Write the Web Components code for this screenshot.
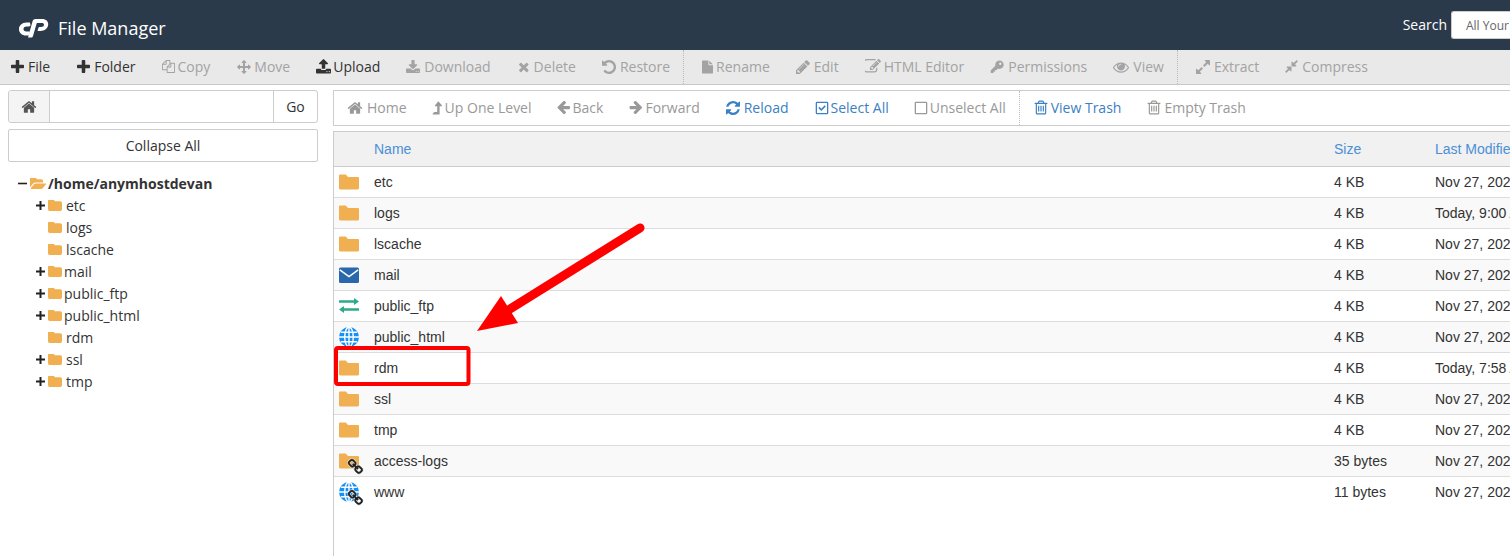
<!DOCTYPE html>
<html lang="en"><head><meta charset="utf-8"><title>File Manager</title>
<style>
html,body{margin:0;padding:0;height:556px;overflow:hidden;background:#fff}
body{font-family:"Open Sans","Liberation Sans",sans-serif;font-size:14px;color:#333}
</style></head><body>
<fm-app></fm-app>
<script>
const P={
home:[1792,"M1472 992v480q0 26-19 45t-45 19h-384v-384h-256v384h-384q-26 0-45-19t-19-45v-480q0-1 .5-3t.5-3l575-474 575 474q1 2 1 6zm223-69l-62 74q-8 9-21 11h-3q-13 0-21-7l-692-577-692 577q-12 8-24 7-13-2-21-11l-62-74q-8-10-7-23.500t11-21.500l719-599q32-26 76-26t76 26l244 204v-195q0-14 9-23t23-9h192q14 0 23 9t9 23v408l219 182q10 8 11 21.500t-7 23.500z"],
folder:[1792,"M1728 608v704q0 92-66 158t-158 66h-1216q-92 0-158-66t-66-158v-960q0-92 66-158t158-66h320q92 0 158 66t66 158v32h672q92 0 158 66t66 158z","64 240 1664 1300"],
open:[1920,"M1879 952q0 31-31 66l-336 396q-43 51-120.500 86.500t-143.500 35.500h-1088q-34 0-60.500-13t-26.500-43q0-31 31-66l336-396q43-51 120.500-86.500t143.500-35.500h1088q34 0 60.500 13t26.500 43zm-343-344v160h-832q-94 0-197 47.500t-164 119.500l-337 396-5 6q0-4-.5-12.500t-.5-12.500v-960q0-92 66-158t158-66h320q92 0 158 66t66 158v32h544q92 0 158 66t66 158z","0 256 1879 1280"],
plus:[1792,"M1600 736v192q0 40-28 68t-68 28h-416v416q0 40-28 68t-68 28h-192q-40 0-68-28t-28-68v-416h-416q-40 0-68-28t-28-68v-192q0-40 28-68t68-28h416v-416q0-40 28-68t68-28h192q40 0 68 28t28 68v416h416q40 0 68 28t28 68z","192 128 1408 1408"],
tplus:[9,"M3.500 0h2v3.500H9v2H5.500V9h-2V5.500H0v-2h3.500z","0 0 9 9"],
tminus:[9,"M0 3.700h9v1.600H0z","0 0 9 9"],
close:[1792,"M1490 1322q0 40-28 68l-136 136q-28 28-68 28t-68-28l-294-294-294 294q-28 28-68 28t-68-28l-136-136q-28-28-28-68t28-68l294-294-294-294q-28-28-28-68t28-68l136-136q28-28 68-28t68 28l294 294 294-294q28-28 68-28t68 28l136 136q28 28 28 68t-28 68l-294 294 294 294q28 28 28 68z","46 155 1500 1500"],
undo:[1792,"M1664 896q0 156-61 298t-164 245-245 164-298 61q-172 0-327-72.500t-264-204.500q-7-10-6.500-22.500t8.500-20.500l137-138q10-9 25-9 16 2 23 12 73 95 179 147t225 52q104 0 198.500-40.500t163.500-109.500 109.500-163.500 40.500-198.500-40.500-198.500-109.500-163.500-163.500-109.500-198.500-40.500q-98 0-188 35.500t-160 101.500l137 138q31 30 14 69-17 40-59 40h-448q-26 0-45-19t-19-45v-448q0-42 40-59 39-17 69 14l130 129q107-101 244.500-156.500t284.500-55.500q156 0 298 61t245 164 164 245 61 298z","128 128 1536 1536"],
refresh:[1792,"M1639 1056q0 5-1 7-64 268-268 434.500t-478 166.500q-146 0-282.500-55t-243.500-157l-129 129q-19 19-45 19t-45-19-19-45v-448q0-26 19-45t45-19h448q26 0 45 19t19 45-19 45l-137 137q71 66 161 102t187 36q134 0 250-65t186-179q11-17 53-117 8-23 30-23h192q13 0 22.500 9.500t9.500 22.500zm25-800v448q0 26-19 45t-45 19h-448q-26 0-45-19t-19-45 19-45l138-138q-148-137-349-137-134 0-250 65t-186 179q-11 17-53 117-8 23-30 23h-199q-13 0-22.500-9.500t-9.500-22.500v-7q65-268 270-434.500t480-166.500q146 0 284 55.500t245 156.500l130-129q19-19 45-19t45 19 19 45z","128 128 1536 1536"],
left:[1792,"M1664 896v128q0 53-32.500 90.500t-84.500 37.500h-704l293 294q38 36 38 90t-38 90l-75 76q-37 37-90 37-52 0-91-37l-651-652q-37-37-37-90 0-52 37-91l651-650q38-38 91-38 52 0 90 38l75 74q38 38 38 91t-38 91l-293 293h704q52 0 84.500 37.500t32.500 90.500z","128 192 1536 1536"],
right:[1792,"M1600 960q0 54-37 91l-651 651q-39 37-91 37-51 0-90-37l-75-75q-38-38-38-91t38-91l293-293h-704q-52 0-84.500-37.500t-32.500-90.500v-128q0-53 32.500-90.500t84.500-37.500h704l-293-294q-38-36-38-90t38-90l75-75q38-38 90-38 53 0 91 38l651 651q37 35 37 90z","64 192 1536 1536"],
pencil:[1792,"M491 1536l91-91-235-235-91 91v107h128v128h107zm523-928q0-22-22-22-10 0-17 7l-542 542q-7 7-7 17 0 22 22 22 10 0 17-7l542-542q7-7 7-17zm-54-192l416 416-832 832h-416v-416zm683 96q0 53-37 90l-166 166-416-416 166-165q36-38 90-38 53 0 91 38l235 234q37 39 37 91z","128 128 1536 1536"],
file:[1536,"M1024 512v-472q22 14 36 28l408 408q14 14 28 36h-472zm-128 32q0 40 28 68t68 28h544v1056q0 40-28 68t-68 28h-1344q-40 0-68-28t-28-68v-1600q0-40 28-68t68-28h800v544z"],
eye:[1792,"M1664 960q-152-236-381-353 61 104 61 225 0 185-131.500 316.500t-316.500 131.500-316.500-131.500-131.500-316.500q0-121 61-225-229 117-381 353 133 205 333.500 326.500t434.500 121.500 434.500-121.500 333.500-326.500zm-720-384q0-20-14-34t-34-14q-125 0-214.500 89.500t-89.500 214.500q0 20 14 34t34 14 34-14 14-34q0-86 61-147t147-61q20 0 34-14t14-34zm848 384q0 34-20 69-140 230-376.500 368.500t-499.500 138.500-499.500-139-376.500-368q-20-35-20-69t20-69q140-229 376.500-368t499.500-139 499.500 139 376.500 368q20 35 20 69z"],
key:[15,"M10 .5a4.500 4.500 0 1 1-1.500 8.700L6.700 11H5.200v1.500H3.700V14H.8L.7 11.200 5.800 6.200A4.500 4.500 0 0 1 10 .5zM11 2.700a1.300 1.300 0 1 0 0 2.600 1.300 1.300 0 0 0 0-2.600z","0 0 15 15",1],
upload:[1792,"M1344 1472q0-26-19-45t-45-19-45 19-19 45 19 45 45 19 45-19 19-45zm256 0q0-26-19-45t-45-19-45 19-19 45 19 45 45 19 45-19 19-45zm128-224v320q0 40-28 68t-68 28h-1472q-40 0-68-28t-28-68v-320q0-40 28-68t68-28h427q21 56 70.500 92t110.500 36h256q61 0 110.500-36t70.500-92h427q40 0 68 28t28 68zm-325-648q-17 40-59 40h-256v448q0 26-19 45t-45 19h-256q-26 0-45-19t-19-45v-448h-256q-42 0-59-40-17-39 14-69l448-448q18-19 45-19t45 19l448 448q31 30 14 69z","64 64 1664 1664"],
download:[1792,"M1344 1344q0-26-19-45t-45-19-45 19-19 45 19 45 45 19 45-19 19-45zm256 0q0-26-19-45t-45-19-45 19-19 45 19 45 45 19 45-19 19-45zm128-224v320q0 40-28 68t-68 28h-1472q-40 0-68-28t-28-68v-320q0-40 28-68t68-28h465l135 136q58 56 136 56t136-56l136-136h464q40 0 68 28t28 68zm-325-569q17 41-14 70l-448 448q-18 19-45 19t-45-19l-448-448q-31-29-14-70 17-39 59-39h256v-448q0-26 19-45t45-19h256q26 0 45 19t19 45v448h256q42 0 59 39z","64 0 1664 1664"],
arrows:[1792,"M1792 896q0 26-19 45l-256 256q-19 19-45 19t-45-19-19-45v-128h-384v384h128q26 0 45 19t19 45-19 45l-256 256q-19 19-45 19t-45-19l-256-256q-19-19-19-45t19-45 45-19h128v-384h-384v128q0 26-19 45t-45 19-45-19l-256-256q-19-19-19-45t19-45l256-256q19-19 45-19t45 19 19 45v128h384v-384h-128q-26 0-45-19t-19-45 19-45l256-256q19-19 45-19t45 19l256 256q19 19 19 45t-19 45-45 19h-128v384h384v-128q0-26 19-45t45-19 45 19l256 256q19 19 19 45z"],
expand:[1792,"M883 1056q0 13-10 23l-332 332 144 144q19 19 19 45t-19 45-45 19h-448q-26 0-45-19t-19-45v-448q0-26 19-45t45-19 45 19l144 144 332-332q10-10 23-10t23 10l114 114q10 10 10 23zm781-864v448q0 26-19 45t-45 19-45-19l-144-144-332 332q-10 10-23 10t-23-10l-114-114q-10-10-10-23t10-23l332-332-144-144q-19-19-19-45t19-45 45-19h448q26 0 45 19t19 45z","128 128 1536 1536"],
compress:[1792,"M896 960v448q0 26-19 45t-45 19-45-19l-144-144-332 332q-10 10-23 10t-23-10l-114-114q-10-10-10-23t10-23l332-332-144-144q-19-19-19-45t19-45 45-19h448q26 0 45 19t19 45zm755-672q0 13-10 23l-332 332 144 144q19 19 19 45t-19 45-45 19h-448q-26 0-45-19t-19-45v-448q0-26 19-45t45-19 45 19l144 144 332-332q10-10 23-10t23 10l114 114q10 10 10 23z","128 128 1536 1536"],
trash:[1792,"M704 736v576q0 14-9 23t-23 9h-64q-14 0-23-9t-9-23v-576q0-14 9-23t23-9h64q14 0 23 9t9 23zm256 0v576q0 14-9 23t-23 9h-64q-14 0-23-9t-9-23v-576q0-14 9-23t23-9h64q14 0 23 9t9 23zm256 0v576q0 14-9 23t-23 9h-64q-14 0-23-9t-9-23v-576q0-14 9-23t23-9h64q14 0 23 9t9 23zm128 724v-948h-896v948q0 22 7 40.500t14.500 27 10.500 8.500h832q3 0 10.500-8.500t14.500-27 7-40.500zm-672-1076h448l-48-117q-7-9-17-11h-317q-10 2-17 11zm928 32v64q0 14-9 23t-23 9h-96v948q0 83-47 143.500t-113 60.500h-832q-66 0-113-58.500t-47-141.500v-952h-96q-14 0-23-9t-9-23v-64q0-14 9-23t23-9h309l70-167q15-37 54-63t79-26h320q40 0 79 26t54 63l70 167h309q14 0 23 9t9 23z","128 128 1536 1536"],
edit:[1792,"M888 1184l116-116-152-152-116 116v56h96v96h56zm440-720q-16-16-33 1l-350 350q-17 17-1 33t33-1l350-350q17-17 1-33zm80 594v190q0 119-84.500 203.500t-203.500 84.500h-832q-119 0-203.500-84.500t-84.500-203.500v-832q0-119 84.500-203.500t203.500-84.500h832q63 0 117 25 15 7 18 23 3 17-9 29l-49 49q-14 14-32 8-23-6-45-6h-832q-66 0-113 47t-47 113v832q0 66 47 113t113 47h832q66 0 113-47t47-113v-126q0-13 9-22l64-64q15-15 35-7t20 29zm-96-738l288 288-672 672h-288v-288zm444 132l-92 92-288-288 92-92q27-27 68-27t68 27l152 152q27 27 27 68t-27 68z","128 128 1664 1664"],
copy:[1792,"M1696 384q40 0 68 28t28 68v1216q0 40-28 68t-68 28h-960q-40 0-68-28t-28-68v-288h-544q-40 0-68-28t-28-68v-672q0-40 20-88t48-76l408-408q28-28 76-48t88-20h416q40 0 68 28t28 68v328q68-40 128-40h416zm-544 213l-299 299h299v-299zm-640-384l-299 299h299v-299zm196 647l316-316v-416h-384v416q0 40-28 68t-68 28h-416v640h512v-256q0-40 20-88t48-76zm956 804v-1152h-384v416q0 40-28 68t-68 28h-416v640h896z"],
up:[1408,"M1395 603q-18 37-58 37h-192v864q0 14-9 23t-23 9h-704q-21 0-29-18-8-20 4-35l160-192q9-11 25-11h320v-640h-192q-40 0-58-37-17-37 9-68l320-384q18-22 49-22t49 22l320 384q27 32 9 68z","320 128 1088 1408"],
chk:[14,"M2 .7h10A1.300 1.300 0 0 1 13.300 2v10A1.300 1.300 0 0 1 12 13.300H2A1.300 1.300 0 0 1 .7 12V2A1.300 1.300 0 0 1 2 .7zM2 2v10h10V2zM3.300 6.900l1.100-1.100 1.900 1.900 3.400-3.400 1.100 1.100-4.500 4.500z","0 0 14 14",1],
sq:[14,"M2 .7h10A1.300 1.300 0 0 1 13.300 2v10A1.300 1.300 0 0 1 12 13.300H2A1.300 1.300 0 0 1 .7 12V2A1.300 1.300 0 0 1 2 .7zM2 2v10h10V2z","0 0 14 14",1],
link:[1792,"M1456 1216q0-40-28-68l-208-208q-28-28-68-28-42 0-72 32 3 3 19 18.500t21.500 21.500 15 19 13 25.500 3.500 27.500q0 40-28 68t-68 28q-15 0-27.500-3.500t-25.500-13-19-15-21.500-21.500-18.500-19q-33 31-33 73 0 40 28 68l206 207q27 27 68 27 40 0 68-26l147-146q28-28 28-67zm-703-705q0-40-28-68l-206-207q-28-28-68-28-39 0-68 27l-147 146q-28 28-28 67 0 40 28 68l208 208q27 27 68 27 42 0 72-31-3-3-19-18.500t-21.500-21.500-15-19-13-25.500-3.500-27.500q0-40 28-68t68-28q15 0 27.500 3.500t25.500 13 19 15 21.500 21.500 18.500 19q33-31 33-73zm895 705q0 120-85 203l-147 146q-83 83-203 83-121 0-204-85l-206-207q-83-83-83-203 0-123 88-209l-88-88q-86 88-208 88-120 0-204-84l-208-208q-84-84-84-204t85-203l147-146q83-83 203-83 121 0 204 85l206 207q83 83 83 203 0 123-88 209l88 88q86-88 208-88 120 0 204 84l208 208q84 84 84 204z"]
};
const glyph=(n,w,h,c)=>{const[v,d,vb,eo]=P[n];return `<svg width="${w}" height="${h}" viewBox="${vb||`0 0 ${v} 1792`}" fill="${c||'currentColor'}" ${eo?'fill-rule="evenodd"':''} style="display:block;flex:none"><path d="${d}"/></svg>`};
const GLOBE=`<circle cx="10" cy="10" r="10" fill="#1590f5"/><g fill="none" stroke="#fff" stroke-width="1.400"><ellipse cx="10" cy="10" rx="4.300" ry="10"/><path d="M10 0v20M0 10h20M1.800 5.200h16.400M1.800 14.800h16.400"/></g>`;
const FOLD=`<path fill="#f0af50" d="M0 3.700C0 3 .5 2.500 1.200 2.500h5.600l2.200 2.500h9.800c.7 0 1.200.5 1.200 1.200v10.100c0 .7-.5 1.200-1.200 1.200H1.200C.5 17.500 0 17 0 16.300z"/>`;
const LINK=`<g transform="translate(8.830 7.830) scale(.0091)"><path d="${P.link[1]}" fill="#fff" stroke="#fff" stroke-width="150" opacity=".8"/><path d="${P.link[1]}" fill="#222" stroke="#222" stroke-width="40"/></g>`;
const FILES={
 folder:FOLD,
 mail:`<rect x="0" y="2.500" width="20" height="15.500" rx="1.500" fill="#2a68ad"/><path d="M.8 4.800L10 11.500l9.200-6.700" fill="none" stroke="#fff" stroke-width="1.500"/>`,
 ftp:`<path fill="#2bab8a" d="M0 4.200h15V2l5 3.500L15 9V6.800H0zM20 12.200H5V10l-5 3.500L5 17v-2.200h15z"/>`,
 globe:GLOBE,
 flink:FOLD+LINK,
 glink:GLOBE+LINK
};
function def(tag,css,html){customElements.define(tag,class extends HTMLElement{connectedCallback(){if(this.shadowRoot)return;const r=this.attachShadow({mode:'open'});r.innerHTML=`<style>${css}</style>`+(typeof html==='function'?html(this):html);}})}

def('fm-header',`:host{display:flex;align-items:center;height:50px;background:#2b3a4b;color:#fff;flex:none;position:relative}
 .logo{margin-left:19px;margin-top:7px;display:block}
 .t{margin-left:9px;font-size:18px;position:relative;top:3px}
 .s{margin-left:auto;display:flex;align-items:center;font-size:14px}
 .s b{font-weight:400;margin-right:4px;position:relative;top:-1px}
 .i{width:70px;height:28px;box-sizing:border-box;background:#fff;border:1px solid #ccc;border-right:0;border-radius:3px 0 0 3px;color:#666;font-size:12px;padding:0 0 0 14px;line-height:27px;white-space:nowrap;overflow:hidden;margin-right:-11px}`,
`<svg class="logo" width="30" height="19" viewBox="0 0 30 19"><path fill="#fff" d="M11 3.500H7.500C3 3.500 0 6.500 0 10c0 4 3 6.500 7 6.500h1.500c1 0 1.500-.5 1.800-1.500l.7-2.500H7.500c-2 0-3.200-1-3-2.700.2-1.500 1.500-2.300 3-2.300H10c.8 0 1.300-.5 1.500-1.200z"/><path fill="#fff" d="M9 18.500l4.500-16C13.800 1 14.800 0 16.500 0H23c4 0 6.500 2.400 6.200 5.800C28.900 9.500 25.500 12 21.500 12h-3l.8-2.700c.2-.8.700-1.300 1.700-1.300h1c1.800 0 3-1 3-2.300C25 4.500 24 4 23 4h-5.200L14 17c-.3 1-1 1.500-2 1.500z"/></svg><span class="t">File Manager</span><div class="s"><b>Search</b><div class="i">All Your Files</div></div>`);

def('fm-tool',`:host{display:inline-flex;align-items:center;padding:0 13px;gap:var(--g,3px);white-space:nowrap;color:var(--c,#a3a3a3);height:100%;font-size:14px}
 :host([on]){color:var(--on,#333)} i{display:block;font-style:normal}`,
 h=>`<i>${glyph(h.getAttribute('i'),+(h.getAttribute('w')||14),+(h.getAttribute('h')||h.getAttribute('w')||14))}</i><slot></slot>`);
def('fm-sep',`:host{display:block;width:0;border-left:1px dotted #bbb;align-self:stretch;margin-bottom:var(--sb,0)}`,'');
def('fm-toolbar',`:host{display:flex;align-items:center;height:33px;padding-bottom:1px;background:#e9e9e9;border-bottom:1px solid #c8c8c8;flex:none;--sb:-1px}`,`<slot></slot>`);

def('fm-path',`:host{display:flex;height:33px;box-sizing:border-box;border:1px solid #ccc;border-radius:3px;background:#fff;flex:none}
 .h{width:40px;background:#f4f4f4;border-right:1px solid #ccc;display:flex;align-items:center;justify-content:center;color:#555;border-radius:3px 0 0 3px}
 .m{flex:1} .g{width:43px;border-left:1px solid #ccc;display:flex;align-items:center;justify-content:center;color:#333}`,
 `<div class="h">${glyph('home',16,16)}</div><div class="m"></div><div class="g">Go</div>`);
def('fm-collapse',`:host{display:flex;height:33px;box-sizing:border-box;border:1px solid #ccc;border-radius:2px;align-items:center;justify-content:center;color:#333;background:#fff;flex:none;margin-top:6px}`,`<slot></slot>`);
def('fm-tree-item',`:host{display:flex;align-items:center;height:22px;color:#333;font-size:14px;white-space:nowrap;padding-left:28px}
 .e{width:9px;margin-right:3px;flex:none;display:flex;justify-content:center;color:#222}
 .f{flex:none}
 :host([root]){padding-left:10px;font-weight:700}`,
 h=>{const root=h.hasAttribute('root');const k=h.getAttribute('e');
  return `<span class="e">${k?glyph(k,9,9):''}</span><span class="f" style="margin-right:${root?2:(h.getAttribute('g')||4)}px">${glyph(root?'open':'folder',root?16:14,11,'#f0af50')}</span><slot></slot>`});
def('fm-tree',`:host{display:block;margin-top:10px}`,`<slot></slot>`);
def('fm-side',`:host{display:flex;flex-direction:column;width:310px;margin-left:8px;flex:none;padding-top:5px}`,`<slot></slot>`);

def('fm-nav',`:host{display:flex;align-items:center;height:36px;padding-bottom:1px;box-sizing:border-box;border:1px solid #ccc;border-width:1px 0 1px 1px;background:#fff;flex:none;--c:#999;--on:#3b80c4;--sb:-1px}`,`<slot></slot>`);
const GRID='grid-template-columns:40px 960px 101px 200px';
def('fm-row',`:host{display:grid;${GRID};height:31px;align-items:center;border-top:1px solid #ddd;box-sizing:border-box;font:14px "Liberation Sans",Arial,sans-serif;color:#333;white-space:nowrap;background:#fff}
 :host([odd]){background:#f9f9f9} :host([first]){border-top-color:#ccc}
 .i{padding-left:5px;display:flex;align-items:center}`,
 h=>`<div class="i"><svg width="20" height="20" viewBox="0 0 20 20" style="display:block;overflow:visible">${FILES[h.dataset.i]}</svg></div><div>${h.dataset.n}</div><div>${h.dataset.s}</div><div>${h.dataset.d}</div>`);
def('fm-table-head',`:host{display:grid;${GRID};height:35px;align-items:center;background:#f1f1f1;box-sizing:border-box;border-top:1px solid #ccc;font:14px "Liberation Sans",Arial,sans-serif;color:#4a8fd8;white-space:nowrap}`,`<div></div><div>Name</div><div>Size</div><div>Last Modified</div>`);
def('fm-table',`:host{display:block;margin-top:5px;border-left:1px solid #ccc;height:426px;width:1400px}`,`<slot></slot>`);
def('fm-main',`:host{display:block;flex:none;width:1300px;padding-top:5px;margin-left:15px}`,`<slot></slot>`);
def('fm-body',`:host{display:flex;flex:1;min-height:0}`,`<slot></slot>`);
def('fm-annot',`:host{position:absolute;left:0;top:0;width:1510px;height:556px;pointer-events:none}
 svg{display:block}`,
 `<svg width="1510" height="556" viewBox="0 0 1510 556"><path d="M640 228L510 309" stroke="#f00" stroke-width="9" stroke-linecap="round" fill="none"/><path d="M501 296L518 323L477 331Z" fill="#f00"/><rect x="336" y="348" width="132.500" height="36" rx="2" fill="none" stroke="#f00" stroke-width="4"/></svg>`);
def('fm-app',`:host{display:flex;flex-direction:column;width:1510px;height:556px;overflow:hidden;position:relative}`,
`<fm-header></fm-header>
<fm-toolbar>
<fm-tool i="plus" on w="13" style="padding-left:11px;padding-right:14px;--g:4px">File</fm-tool><fm-tool i="plus" on w="13" style="--g:4px">Folder</fm-tool><fm-tool i="copy" w="13" style="padding-right:14px">Copy</fm-tool><fm-tool i="arrows">Move</fm-tool><fm-tool i="upload" on w="15" style="--g:2px">Upload</fm-tool><fm-tool i="download" style="--g:4px">Download</fm-tool><fm-tool i="close" w="12" style="--g:5px">Delete</fm-tool><fm-tool i="undo" style="--g:4px">Restore</fm-tool><fm-sep></fm-sep>
<fm-tool i="file" w="11" h="14" style="padding-left:18px;--g:3px">Rename</fm-tool><fm-tool i="pencil" style="--g:4px">Edit</fm-tool><fm-tool i="edit" w="16">HTML Editor</fm-tool><fm-tool i="key" style="--g:4px">Permissions</fm-tool><fm-tool i="eye" w="16" style="--g:4px">View</fm-tool><fm-sep></fm-sep>
<fm-tool i="expand" style="padding-left:18px;--g:4px">Extract</fm-tool><fm-tool i="compress" w="13" style="--g:4px">Compress</fm-tool>
</fm-toolbar>
<fm-body>
<fm-side><fm-path></fm-path><fm-collapse>Collapse All</fm-collapse>
<fm-tree>
<fm-tree-item root e="tminus">/home/anymhostdevan</fm-tree-item>
<fm-tree-item e="tplus">etc</fm-tree-item><fm-tree-item>logs</fm-tree-item><fm-tree-item>lscache</fm-tree-item><fm-tree-item e="tplus" g="2">mail</fm-tree-item><fm-tree-item e="tplus" g="2">public_ftp</fm-tree-item><fm-tree-item e="tplus" g="2">public_html</fm-tree-item><fm-tree-item>rdm</fm-tree-item><fm-tree-item e="tplus">ssl</fm-tree-item><fm-tree-item e="tplus">tmp</fm-tree-item>
</fm-tree></fm-side>
<fm-main>
<fm-nav>
<fm-tool i="home" w="16" style="--g:4px">Home</fm-tool><fm-tool i="up" w="10" h="14" style="padding-left:12px;padding-right:12px">Up One Level</fm-tool><fm-tool i="left" w="13">Back</fm-tool><fm-tool i="right" w="13" style="--g:3px">Forward</fm-tool><fm-tool i="refresh" on style="--g:4px">Reload</fm-tool><fm-tool i="chk" on w="14" style="--g:2px;padding-right:12px">Select All</fm-tool><fm-tool i="sq" w="14" style="--g:2px">Unselect All</fm-tool><fm-sep></fm-sep>
<fm-tool i="trash" on h="15" style="padding-left:14px">View Trash</fm-tool><fm-tool i="trash" h="15">Empty Trash</fm-tool>
</fm-nav>
<fm-table><fm-table-head></fm-table-head>
<fm-row first data-i="folder" data-n="etc" data-s="4 KB" data-d="Nov 27, 2023, 9:00 AM"></fm-row>
<fm-row odd data-i="folder" data-n="logs" data-s="4 KB" data-d="Today, 9:00 AM"></fm-row>
<fm-row data-i="folder" data-n="lscache" data-s="4 KB" data-d="Nov 27, 2023, 9:00 AM"></fm-row>
<fm-row odd data-i="mail" data-n="mail" data-s="4 KB" data-d="Nov 27, 2023, 9:00 AM"></fm-row>
<fm-row data-i="ftp" data-n="public_ftp" data-s="4 KB" data-d="Nov 27, 2023, 9:00 AM"></fm-row>
<fm-row odd data-i="globe" data-n="public_html" data-s="4 KB" data-d="Nov 27, 2023, 9:00 AM"></fm-row>
<fm-row data-i="folder" data-n="rdm" data-s="4 KB" data-d="Today, 7:58 AM"></fm-row>
<fm-row odd data-i="folder" data-n="ssl" data-s="4 KB" data-d="Nov 27, 2023, 9:00 AM"></fm-row>
<fm-row data-i="folder" data-n="tmp" data-s="4 KB" data-d="Nov 27, 2023, 9:00 AM"></fm-row>
<fm-row odd data-i="flink" data-n="access-logs" data-s="35 bytes" data-d="Nov 27, 2023, 9:00 AM"></fm-row>
<fm-row data-i="glink" data-n="www" data-s="11 bytes" data-d="Nov 27, 2023, 9:00 AM"></fm-row>
</fm-table>
</fm-main>
</fm-body>
<fm-annot></fm-annot>`);
</script>
</body></html>
